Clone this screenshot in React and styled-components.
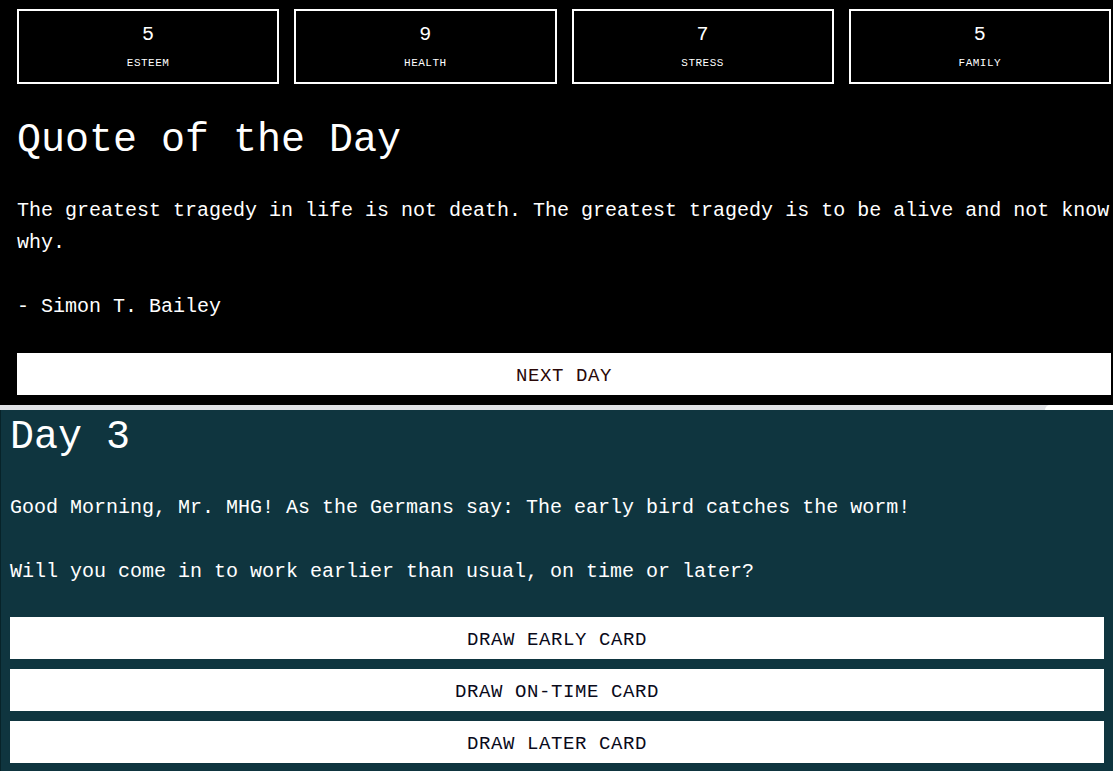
import React from "react";
import styled, { createGlobalStyle } from "styled-components";

const GlobalStyle = createGlobalStyle`
  html, body {
    margin: 0;
    padding: 0;
    background: #0f353f;
  }
  body {
    font-family: "Liberation Mono", "DejaVu Sans Mono", monospace;
    overflow: hidden;
  }
`;

const TopSection = styled.section`
  background: #000000;
  color: #ffffff;
  padding: 9px 2px 10px 17px;
`;

const StatGrid = styled.div`
  display: grid;
  grid-template-columns: repeat(4, 1fr);
  gap: 15px;
`;

const StatBox = styled.div`
  border: 2px solid #ffffff;
  display: flex;
  flex-direction: column;
  align-items: center;
  padding: 14px 0 13px;
  gap: 13px;
`;

const StatValue = styled.div`
  font-size: 20px;
  line-height: 20px;
`;

const StatLabel = styled.div`
  font-size: 11px;
  line-height: 11px;
  letter-spacing: 0.5px;
`;

const Heading = styled.h1`
  margin: ${(p) => p.$top || 0}px 0 32px;
  font-size: 40px;
  line-height: 45px;
  font-weight: normal;
`;

const Para = styled.p`
  margin: 0 0 ${(p) => p.$bottom || 0}px;
  font-size: 20px;
  line-height: 32px;
`;

const ActionButton = styled.button`
  display: flex;
  align-items: center;
  justify-content: center;
  width: 100%;
  height: 42px;
  border: none;
  background: #ffffff;
  color: ${(p) => p.$ink || "#0a0a1a"};
  font-family: "Liberation Mono", "DejaVu Sans Mono", monospace;
  font-size: 19px;
  letter-spacing: 0.6px;
  cursor: pointer;
  padding: 3px 0 0;
`;

const ScrollStrip = styled.div`
  display: flex;
  height: 5px;
  background: #dfe1e5;
`;

const ScrollThumb = styled.div`
  margin-left: auto;
  width: 68px;
  background: #ffffff;
  border-top-left-radius: 5px;
`;

const DaySection = styled.section`
  background: #0f353f;
  color: #ffffff;
  border-left: 1px solid #072329;
  padding: 5px 9px 8px 9px;
`;

const CardList = styled.div`
  display: flex;
  flex-direction: column;
  gap: 10px;
  margin-top: 29px;
`;

const stats = [
  { value: 5, label: "ESTEEM" },
  { value: 9, label: "HEALTH" },
  { value: 7, label: "STRESS" },
  { value: 5, label: "FAMILY" },
];

const cards = ["DRAW EARLY CARD", "DRAW ON-TIME CARD", "DRAW LATER CARD"];

export default function App() {
  return (
    <>
      <GlobalStyle />
      <TopSection>
        <StatGrid>
          {stats.map((s) => (
            <StatBox key={s.label}>
              <StatValue>{s.value}</StatValue>
              <StatLabel>{s.label}</StatLabel>
            </StatBox>
          ))}
        </StatGrid>
        <Heading $top={34}>Quote of the Day</Heading>
        <Para $bottom={32}>
          The greatest tragedy in life is not death. The greatest tragedy is to be alive and not know why.
        </Para>
        <Para $bottom={30}>- Simon T. Bailey</Para>
        <ActionButton $ink="#2a0808">NEXT DAY</ActionButton>
      </TopSection>
      <ScrollStrip>
        <ScrollThumb />
      </ScrollStrip>
      <DaySection>
        <Heading>Day 3</Heading>
        <Para $bottom={32}>
          Good Morning, Mr. MHG! As the Germans say: The early bird catches the worm!
        </Para>
        <Para>Will you come in to work earlier than usual, on time or later?</Para>
        <CardList>
          {cards.map((c) => (
            <ActionButton key={c}>{c}</ActionButton>
          ))}
        </CardList>
      </DaySection>
    </>
  );
}
